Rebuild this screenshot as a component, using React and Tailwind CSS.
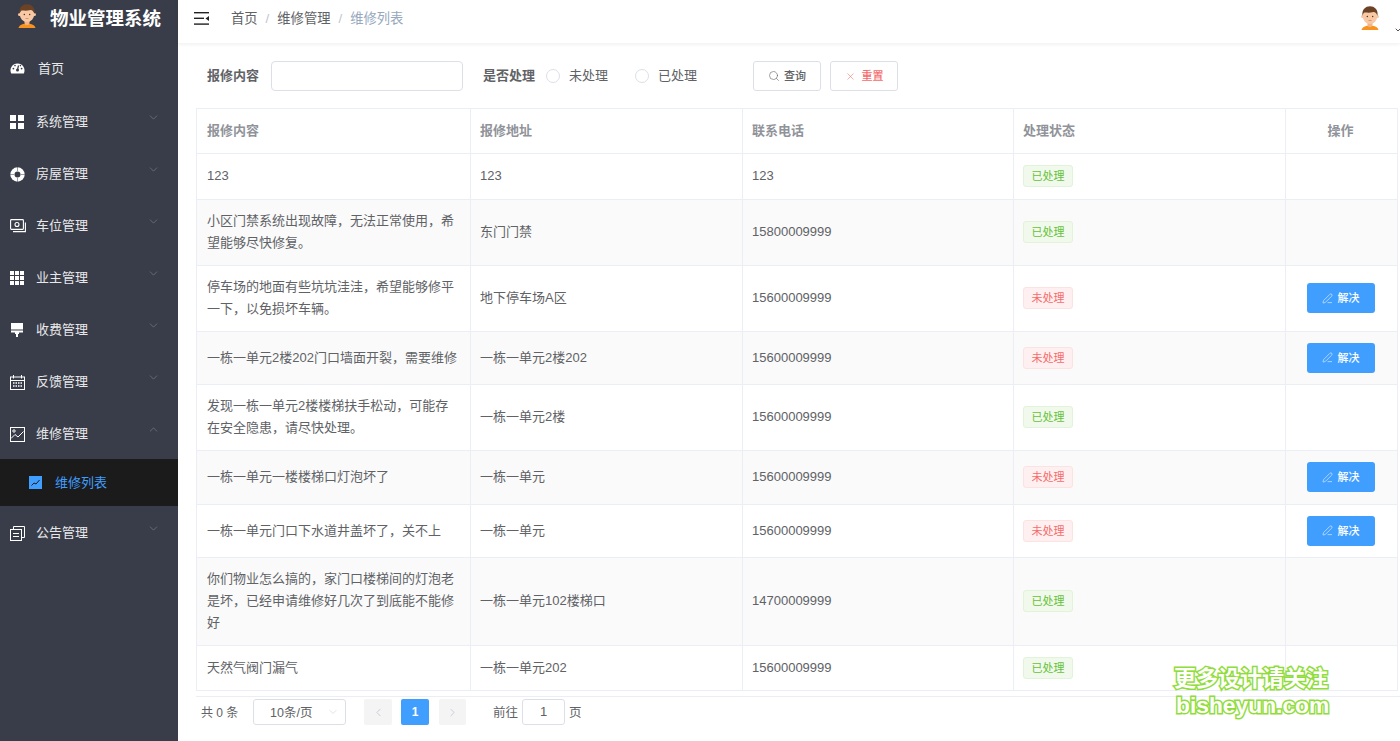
import { Search, X, ChevronDown, ChevronUp, ChevronLeft, ChevronRight, PenLine } from "lucide-react";

const IconGauge = () => (
  <svg width="15" height="13" viewBox="0 0 15 13" className="mt-[-2px]">
    <path d="M1.2 11.5A7 7 0 1 1 13.8 11.5Z" fill="#fff" />
    <circle cx="7.5" cy="8" r="1.5" fill="#393d49" />
    <path d="M7.5 8 L8.5 3.5" stroke="#393d49" strokeWidth="1.2" />
    <circle cx="3.4" cy="6.6" r=".9" fill="#393d49" />
    <circle cx="11.6" cy="6.6" r=".9" fill="#393d49" />
    <circle cx="5" cy="3.6" r=".8" fill="#393d49" />
    <circle cx="10.4" cy="3.6" r=".8" fill="#393d49" />
  </svg>
);
const IconGrid = () => (
  <svg width="14" height="14" viewBox="0 0 14 14" fill="#fff">
    <rect width="6" height="6" />
    <rect x="8" width="6" height="6" />
    <rect y="8" width="6" height="6" />
    <rect x="8" y="8" width="6" height="6" />
  </svg>
);
const IconRing = () => (
  <svg width="15" height="15" viewBox="0 0 15 15">
    <circle cx="7.5" cy="7.5" r="7.2" fill="#fff" />
    <circle cx="7.5" cy="7.5" r="3" fill="#393d49" />
    <path d="M7.5 0V4M7.5 11V15M0 7.5H4M11 7.5H15" stroke="#393d49" strokeWidth=".5" />
  </svg>
);
const IconMoney = () => (
  <svg width="16" height="14" viewBox="0 0 16 14" fill="none" stroke="#fff" strokeWidth="1.1">
    <rect x=".6" y=".6" width="12.8" height="9.8" rx=".8" />
    <circle cx="7" cy="5.5" r="2" />
    <path d="M3 12.6H15.4V3.5" />
  </svg>
);
const IconGrid9 = () => (
  <svg width="14" height="14" viewBox="0 0 14 14" fill="#fff">
    {[0, 5, 10].flatMap((y) =>
      [0, 5, 10].map((x) => <rect key={`${x}-${y}`} x={x} y={y} width="4" height="4" />)
    )}
  </svg>
);
const IconBrush = () => (
  <svg width="12" height="14" viewBox="0 0 12 14" fill="#fff" className="ml-[1px]">
    <path d="M0 0H12V6.5H0Z" />
    <path d="M0 7.5H12V9.5H8V11H7V14H5V11H4V9.5H0Z" />
  </svg>
);
const IconCalendar = () => (
  <svg width="15" height="15" viewBox="0 0 15 15" fill="none" stroke="#fff" strokeWidth="1">
    <rect x=".5" y="2" width="14" height="12.5" />
    <path d="M3.5 0V3.5M11.5 0V3.5M.5 5.5H14.5" />
    <path d="M3 8H12M3 11H12" strokeDasharray="1.5 1" strokeWidth="1.4" />
  </svg>
);
const IconPicture = () => (
  <svg width="15" height="15" viewBox="0 0 15 15" fill="none" stroke="#fff" strokeWidth="1">
    <rect x=".5" y=".5" width="14" height="14" />
    <path d="M1 11.5L5 7.5L8 10L13.5 4.5" />
    <circle cx="4" cy="4" r="1.2" />
  </svg>
);
const IconLine = () => (
  <svg width="13" height="13" viewBox="0 0 13 13">
    <rect width="13" height="13" fill="#409eff" />
    <path d="M2.5 9.5L5 7L7 8L10.5 4" fill="none" stroke="#1b1b1b" strokeWidth="1" />
  </svg>
);
const IconCopy = () => (
  <svg width="15" height="15" viewBox="0 0 15 15" fill="none" stroke="#fff" strokeWidth="1">
    <rect x=".5" y="3.5" width="11" height="11" />
    <path d="M3.5 3.5V.5H14.5V11.5H11.5" />
    <path d="M3 7.5H9M3 10.5H9" />
  </svg>
);

const Avatar = ({ size }) => (
  <svg width={size} height={size} viewBox="0 0 24 24">
    <path d="M3.5 24C4.5 20.5 8.5 19.5 12 19.5S19.5 20.5 20.5 24Z" fill="#f7931e" />
    <rect x="9.5" y="15" width="5" height="6" rx="2" fill="#f2b48a" />
    <circle cx="4.6" cy="10.5" r="1.6" fill="#f8c9a4" />
    <circle cx="19.4" cy="10.5" r="1.6" fill="#f8c9a4" />
    <ellipse cx="12" cy="10.5" rx="7.2" ry="7.6" fill="#f8c9a4" />
    <path d="M4.5 10C3.5 3.5 7.5 .2 12 .2S20.5 3.5 19.5 10C18.5 7.5 17.5 6 15.5 6C12 7 8 6.5 6.5 6.5C5.5 7 5 8 4.5 10Z" fill="#6b4226" />
    <circle cx="9.3" cy="10.5" r=".7" fill="#4a2c17" />
    <circle cx="14.7" cy="10.5" r=".7" fill="#4a2c17" />
    <path d="M10.5 14.5H13.5" stroke="#c9825a" strokeWidth=".7" />
  </svg>
);

const menus = [
  { name: "系统管理", icon: <IconGrid /> },
  { name: "房屋管理", icon: <IconRing /> },
  { name: "车位管理", icon: <IconMoney /> },
  { name: "业主管理", icon: <IconGrid9 /> },
  { name: "收费管理", icon: <IconBrush /> },
  { name: "反馈管理", icon: <IconCalendar /> },
];

const rows = [
  { h: "h-[46px]", content: "123", addr: "123", phone: "123", done: true },
  { h: "h-[66px]", content: "小区门禁系统出现故障，无法正常使用，希望能够尽快修复。", addr: "东门门禁", phone: "15800009999", done: true },
  { h: "h-[66px]", content: "停车场的地面有些坑坑洼洼，希望能够修平一下，以免损坏车辆。", addr: "地下停车场A区", phone: "15600009999", done: false },
  { h: "h-[53px]", content: "一栋一单元2楼202门口墙面开裂，需要维修", addr: "一栋一单元2楼202", phone: "15600009999", done: false },
  { h: "h-[66px]", content: "发现一栋一单元2楼楼梯扶手松动，可能存在安全隐患，请尽快处理。", addr: "一栋一单元2楼", phone: "15600009999", done: true },
  { h: "h-[54px]", content: "一栋一单元一楼楼梯口灯泡坏了", addr: "一栋一单元", phone: "15600009999", done: false },
  { h: "h-[53px]", content: "一栋一单元门口下水道井盖坏了，关不上", addr: "一栋一单元", phone: "15600009999", done: false },
  { h: "h-[88px]", content: "你们物业怎么搞的，家门口楼梯间的灯泡老是坏，已经申请维修好几次了到底能不能修好", addr: "一栋一单元102楼梯口", phone: "14700009999", done: true },
  { h: "h-[45px]", content: "天然气阀门漏气", addr: "一栋一单元202", phone: "15600009999", done: true },
];

const MenuItem = ({ name, icon, open }) => (
  <div className="flex h-[52px] items-center pl-[10px] pr-[18px] pt-[2px] text-[13px] text-[#e8e8ea]">
    <span className="flex w-[26px] items-center">{icon}</span>
    <span className="flex-1">{name}</span>
    {open ? (
      <ChevronUp size={13} strokeWidth={1} className="text-[#8d9099] mt-[-10px]" />
    ) : (
      <ChevronDown size={13} strokeWidth={1} className="text-[#8d9099] mt-[-10px]" />
    )}
  </div>
);

const Radio = ({ label }) => (
  <label className="flex items-center">
    <span className="h-[14px] w-[14px] rounded-full border border-[#dcdfe6] bg-white" />
    <span className="ml-[9px] text-[13px] text-[#606266]">{label}</span>
  </label>
);

const Tag = ({ done }) => (
  <span
    className={`inline-flex h-[22px] w-[50px] items-center justify-center rounded-[3px] border text-[11px] ${
      done ? "border-[#e1f3d8] bg-[#f0f9eb] text-[#67c23a]" : "border-[#fde2e2] bg-[#fef0f0] text-[#f56c6c]"
    }`}
  >
    {done ? "已处理" : "未处理"}
  </span>
);

export default function App() {
  return (
    <div className="flex h-[741px] w-[1400px] overflow-hidden bg-white font-['Liberation_Sans','Noto_Sans_CJK_SC',sans-serif]">
      <aside className="w-[178px] shrink-0 bg-[#393d49]">
        <div className="flex h-[43px] items-start pl-[15px] pt-[4px]">
          <Avatar size={24} />
          <span className="ml-[11px] text-[18.5px] leading-[29px] font-bold text-white">物业管理系统</span>
        </div>
        <div className="flex h-[52px] items-center pl-[10px] text-[13px] text-[#e8e8ea]">
          <span className="flex w-[28px] items-center">
            <IconGauge />
          </span>
          首页
        </div>
        {menus.map((m) => (
          <MenuItem key={m.name} name={m.name} icon={m.icon} />
        ))}
        <MenuItem name="维修管理" icon={<IconPicture />} open />
        <div className="flex h-[47px] items-center bg-[#1b1b1b] pl-[29px] text-[13px] text-[#409eff]">
          <span className="flex w-[26px] items-center">
            <IconLine />
          </span>
          维修列表
        </div>
        <MenuItem name="公告管理" icon={<IconCopy />} />
      </aside>

      <main className="relative min-w-0 flex-1">
        <header className="flex h-[43px] items-start shadow-[0_1px_4px_rgba(0,21,41,0.08)]">
          <svg width="15" height="13" viewBox="0 0 15 13" className="ml-[16px] mt-[12px]" fill="#222">
            <rect width="15" height="1.4" />
            <rect y="5.6" width="10" height="1.4" />
            <rect y="11.4" width="15" height="1.4" />
            <path d="M15 4V9L11.5 6.5Z" />
          </svg>
          <nav className="ml-[22px] mt-[9px] flex text-[13.3px] leading-[20px] text-[#606266]">
            <span>首页</span>
            <span className="mx-[8px] text-[#c0c4cc]">/</span>
            <span>维修管理</span>
            <span className="mx-[8px] text-[#c0c4cc]">/</span>
            <span className="text-[#97a8be]">维修列表</span>
          </nav>
          <div className="ml-auto mr-[18px] mt-[6px]">
            <Avatar size={24} />
          </div>
          <ChevronDown size={8} strokeWidth={3} className="absolute right-[-2px] top-[26px] text-[#555]" />
        </header>

        <div className="flex h-[65px] items-center pl-[29px] pt-[1px]">
          <span className="text-[13px] font-bold text-[#606266]">报修内容</span>
          <input className="ml-[12px] h-[30px] w-[192px] rounded-[4px] border border-[#dcdfe6] bg-white" />
          <span className="ml-[20px] text-[13px] font-bold text-[#606266]">是否处理</span>
          <div className="ml-[11px] flex gap-[27px]">
            <Radio label="未处理" />
            <Radio label="已处理" />
          </div>
          <button className="ml-[56px] flex h-[30px] w-[68px] items-center justify-center gap-[4px] rounded-[3px] border border-[#dcdfe6] bg-white text-[11px] font-medium text-[#606266]">
            <Search size={12} strokeWidth={1.2} />
            查询
          </button>
          <button className="ml-[9px] flex h-[30px] w-[68px] items-center justify-center gap-[6px] rounded-[3px] border border-[#dcdfe6] bg-white text-[11px] font-medium text-[#f56c6c]">
            <X size={11} strokeWidth={1.2} />
            重置
          </button>
        </div>

        <div className="ml-[18px] h-[589px] w-[1204px] border-b border-[#ebeef5]">
          <table className="w-[1201px] table-fixed border-separate border-spacing-0 border-l border-t border-[#ebeef5] text-[13px] leading-[22px] text-[#606266]">
            <colgroup>
              <col className="w-[274px]" />
              <col className="w-[272px]" />
              <col className="w-[271px]" />
              <col className="w-[272px]" />
              <col className="w-[112px]" />
            </colgroup>
            <thead>
              <tr className="h-[45px] text-[#909399]">
                <th className="border-b border-r border-[#ebeef5] pl-[10px] pr-[9px] text-left font-bold">报修内容</th>
                <th className="border-b border-r border-[#ebeef5] px-[9px] text-left font-bold">报修地址</th>
                <th className="border-b border-r border-[#ebeef5] px-[9px] text-left font-bold">联系电话</th>
                <th className="border-b border-r border-[#ebeef5] px-[9px] text-left font-bold">处理状态</th>
                <th className="border-b border-r border-[#ebeef5] pl-[8px] pr-[10px] text-center font-bold">操作</th>
              </tr>
            </thead>
            <tbody>
              {rows.map((r, i) => (
                <tr key={i} className={`${r.h} ${i % 2 === 1 ? "bg-[#fafafa]" : ""}`}>
                  <td className="border-b border-r border-[#ebeef5] pb-[1px] pl-[10px] pr-[9px]">{r.content}</td>
                  <td className="border-b border-r border-[#ebeef5] px-[9px] pb-[1px]">{r.addr}</td>
                  <td className="border-b border-r border-[#ebeef5] px-[9px] pb-[1px]">{r.phone}</td>
                  <td className="border-b border-r border-[#ebeef5] px-[9px] pb-[1px]">
                    <div className="flex items-center">
                      <Tag done={r.done} />
                    </div>
                  </td>
                  <td className="border-b border-r border-[#ebeef5] pb-[1px] pr-[2px]">
                    {!r.done && (
                      <button className="mx-auto flex h-[30px] w-[68px] items-center justify-center gap-[5px] rounded-[3px] bg-[#409eff] text-[11px] font-medium text-white">
                        <PenLine size={11} strokeWidth={1.2} />
                        解决
                      </button>
                    )}
                  </td>
                </tr>
              ))}
            </tbody>
          </table>
        </div>

        <div className="ml-[23px] mt-[2px] flex h-[26px] items-center text-[12px] text-[#606266]">
          <span className="w-[52px] pt-[2px]">共 0 条</span>
          <div className="flex h-[26px] w-[93px] items-center justify-between rounded-[3px] border border-[#dcdfe6] pl-[16px] pr-[6px] text-[12.5px]">
            <span className="pt-[2px]">10条/页</span>
            <ChevronDown size={12} strokeWidth={1} className="text-[#c0c4cc]" />
          </div>
          <button className="ml-[18px] flex h-[26px] w-[28px] items-center justify-center rounded-[2px] bg-[#f4f4f5] text-[#c0c4cc]">
            <ChevronLeft size={13} strokeWidth={1.5} />
          </button>
          <span className="ml-[9px] flex h-[26px] w-[28px] items-center justify-center rounded-[2px] bg-[#409eff] font-bold text-white">1</span>
          <button className="ml-[10px] flex h-[26px] w-[27px] items-center justify-center rounded-[2px] bg-[#f4f4f5] text-[#c0c4cc]">
            <ChevronRight size={13} strokeWidth={1.5} />
          </button>
          <span className="ml-[27px] pt-[2px] text-[12.5px]">前往</span>
          <span className="ml-[4px] flex h-[26px] w-[43px] items-center justify-center rounded-[3px] border border-[#dcdfe6] text-[13px]">1</span>
          <span className="ml-[4px] pt-[2px] text-[12.5px]">页</span>
        </div>

        <div className="absolute left-[996px] top-[666px] text-white font-bold [paint-order:stroke_fill] [-webkit-text-stroke:3px_#8fdc3a]">
          <div className="text-[22px] leading-[26px] whitespace-nowrap">更多设计请关注</div>
          <div className="ml-[2px] text-[22.8px] leading-[26px] whitespace-nowrap">bisheyun.com</div>
        </div>
      </main>
    </div>
  );
}
